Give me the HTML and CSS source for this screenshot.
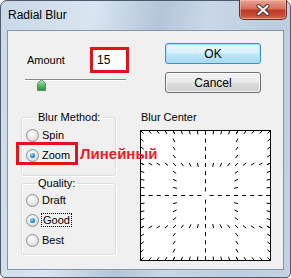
FILE: index.html
```html
<!DOCTYPE html>
<html lang="en">
<head>
    <meta charset="UTF-8">
    <title>Radial Blur</title>
    <link rel="stylesheet" href="styles.css">
</head>
<body>
    <div class="window">
        <div class="titlebar">
            <span class="title">Radial Blur</span>
            <button class="close-btn">
                <svg width="16" height="12" viewBox="0 0 16 12">
                    <path d="M3.5 2 L12.5 10 M12.5 2 L3.5 10" stroke="#4a2f2f" stroke-width="4" stroke-linecap="round"/>
                    <path d="M3.5 2 L12.5 10 M12.5 2 L3.5 10" stroke="#ffffff" stroke-width="2.2" stroke-linecap="round"/>
                </svg>
            </button>
        </div>

        <div class="client">
            <div class="top-row">
                <div class="amount">
                    <div class="amount-line">
                        <label class="amount-label">Amount</label>
                        <input class="amount-input" type="text" value="15">
                    </div>
                    <div class="slider">
                        <div class="slider-track"></div>
                        <svg class="slider-thumb" width="9" height="12" viewBox="0 0 9 12">
                            <defs>
                                <linearGradient id="thumbFill" x1="0" y1="0" x2="0" y2="1">
                                    <stop offset="0" stop-color="#c8f0c8"/>
                                    <stop offset="0.5" stop-color="#5cc26a"/>
                                    <stop offset="1" stop-color="#2f8f3e"/>
                                </linearGradient>
                            </defs>
                            <path d="M0.5 4.5 L4.5 0.5 L8.5 4.5 V11.5 H0.5 Z" fill="url(#thumbFill)" stroke="#5d8a63"/>
                        </svg>
                    </div>
                </div>
                <div class="buttons">
                    <button class="btn btn-default">OK</button>
                    <button class="btn">Cancel</button>
                </div>
            </div>

            <div class="bottom-row">
                <div class="options">
                    <fieldset class="group group-method">
                        <legend>Blur Method:</legend>
                        <label class="radio-row"><span class="radio"></span>Spin</label>
                        <label class="radio-row"><span class="radio checked"></span>Zoom</label>
                        <span class="mark-box"></span>
                        <span class="mark-text">Линейный</span>
                    </fieldset>
                    <fieldset class="group group-quality">
                        <legend>Quality:</legend>
                        <label class="radio-row"><span class="radio"></span>Draft</label>
                        <label class="radio-row"><span class="radio checked"></span><span class="focused">Good</span></label>
                        <label class="radio-row"><span class="radio"></span>Best</label>
                    </fieldset>
                </div>
                <div class="center">
                    <div class="center-label">Blur Center</div>
                    <svg class="center-box" width="131" height="131" viewBox="0 0 131 131">
                        <rect x="0.5" y="0.5" width="130" height="130" fill="#ffffff" stroke="#000000"/>
                        <path id="centerTicks" fill="none" stroke="#000000" stroke-width="1"/>
                    </svg>
                </div>
            </div>
        </div>
    </div>

    <script>
        // Zoom preview: short strokes on a grid, each pointing at the blur center
        const size = 130;
        const mid = size / 2;
        const step = size / 16;
        const len = 4;
        const gridLines = [0, 32.5, 65, 97.5, 130];
        let d = '';

        function tick(x, y) {
            const dx = mid - x;
            const dy = mid - y;
            const dist = Math.hypot(dx, dy);
            if (dist < 1) return;
            const x1 = x + 0.5, y1 = y + 0.5;
            const x2 = x1 + dx / dist * len, y2 = y1 + dy / dist * len;
            d += `M${x1.toFixed(2)} ${y1.toFixed(2)}L${x2.toFixed(2)} ${y2.toFixed(2)}`;
        }

        gridLines.forEach(g => {
            for (let k = 0; k <= 16; k++) {
                tick(k * step, g);
                tick(g, k * step);
            }
        });

        document.getElementById('centerTicks').setAttribute('d', d);
    </script>
</body>
</html>
```

FILE: styles.css
```css
* {
    margin: 0;
    padding: 0;
    box-sizing: border-box;
}

body {
    background: #ffffff;
    font-family: 'Liberation Sans', Arial, sans-serif;
    font-size: 11px;
    color: #000000;
}

.window {
    width: 291px;
    height: 278px;
    display: flex;
    flex-direction: column;
    padding: 0 6px 7px 6px;
    border: 1px solid #4c5a6a;
    border-radius: 7px 7px 5px 5px;
    background: linear-gradient(100deg, #c9d8e8 0%, #d9e5f0 28%, #b3c5d9 48%, #c9d8e7 62%, #bccde0 82%, #c4d3e4 100%);
}

.titlebar {
    height: 29px;
    display: flex;
    align-items: flex-start;
    padding-left: 1px;
}

.title {
    font-size: 12px;
    line-height: 14px;
    margin-top: 7px;
    color: #000000;
}

.close-btn {
    margin-left: auto;
    margin-right: -3px;
    margin-top: -1px;
    width: 48px;
    height: 20px;
    display: flex;
    align-items: center;
    justify-content: center;
    border: 1px solid #6e2a22;
    border-top: none;
    border-radius: 0 0 5px 5px;
    background: linear-gradient(#e9a595 0%, #d8705d 45%, #bf3a25 55%, #c8513b 85%, #d97a5e 100%);
    box-shadow: inset 0 0 0 1px rgba(255, 210, 200, 0.45);
}

.client {
    flex: 1;
    display: flex;
    flex-direction: column;
    background: #f0f0f0;
    border: 1px solid #8196ad;
}

/* top: amount + buttons */

.top-row {
    display: flex;
    justify-content: space-between;
    padding: 12px 22px 0 17px;
}

.amount {
    margin-top: 4px;
}

.amount-line {
    display: flex;
    align-items: center;
}

.amount-label {
    width: 63px;
    margin-left: 2px;
    font-size: 11px;
}

.amount-input {
    width: 39px;
    height: 26px;
    border: 3px solid #e3131b;
    background: #ffffff;
    padding-left: 4px;
    font-family: 'Liberation Sans', Arial, sans-serif;
    font-size: 12px;
    color: #000000;
    outline: none;
}

.slider {
    position: relative;
    width: 101px;
    height: 12px;
    margin-top: -1px;
}

.slider-track {
    margin-top: 7px;
    height: 2px;
    border-top: 1px solid #8a8a8a;
    border-bottom: 1px solid #ffffff;
}

.slider-thumb {
    position: absolute;
    left: 12px;
    top: 0;
}

.buttons {
    display: flex;
    flex-direction: column;
    gap: 8px;
}

.btn {
    width: 96px;
    height: 21px;
    border: 1px solid #707070;
    border-radius: 3px;
    background: linear-gradient(#f2f2f2 0%, #ebebeb 48%, #dddddd 52%, #cfcfcf 100%);
    box-shadow: inset 0 0 0 1px rgba(255, 255, 255, 0.75);
    font-family: 'Liberation Sans', Arial, sans-serif;
    font-size: 12px;
    color: #000000;
}

.btn-default {
    border-color: #3c8fc4;
    background: linear-gradient(#eaf6fd 0%, #d9f0fc 48%, #bee6fd 52%, #a7d9f5 100%);
    box-shadow: inset 0 0 0 1px #a6e4f9;
}

/* bottom: options + blur center */

.bottom-row {
    display: flex;
    margin-top: 18px;
}

.options {
    margin-left: 13px;
    width: 95px;
    display: flex;
    flex-direction: column;
    gap: 1px;
}

.group {
    position: relative;
    border: 1px solid #d5dfe5;
    border-radius: 3px;
    padding: 0 0 0 4px;
    box-shadow: 1px 1px 0 #ffffff, inset 1px 1px 0 #ffffff;
}

.group legend {
    margin-left: 10px;
    padding: 0 2px;
    font-size: 11px;
    line-height: 13px;
}

.group-method {
    height: 65px;
    padding-top: 1px;
}

.group-quality {
    height: 78px;
}

.radio-row {
    height: 20px;
    display: flex;
    align-items: center;
    gap: 3px;
    font-size: 11px;
}

.radio {
    width: 13px;
    height: 13px;
    display: flex;
    align-items: center;
    justify-content: center;
    border-radius: 50%;
    border: 1px solid #8e8f8f;
    background: radial-gradient(circle at 40% 35%, #ffffff 0%, #e6e6e6 55%, #c9c9c9 100%);
}

.radio.checked::after {
    content: '';
    width: 5px;
    height: 5px;
    border-radius: 50%;
    background: radial-gradient(circle at 40% 35%, #9fe0ff 0%, #2185d0 55%, #0a4a86 100%);
}

.focused {
    outline: 1px dotted #000000;
    padding: 0 1px;
}

.mark-box {
    position: absolute;
    left: -6px;
    top: 18px;
    width: 62px;
    height: 23px;
    border: 3px solid #e3131b;
}

.mark-text {
    position: absolute;
    left: 58px;
    top: 21px;
    font-size: 15px;
    font-weight: bold;
    color: #ee1c25;
    white-space: nowrap;
}

.center {
    margin-left: 24px;
}

.center-label {
    margin-left: 1px;
    font-size: 11px;
    line-height: 13px;
    margin-bottom: 6px;
}

.center-box {
    display: block;
}
```
